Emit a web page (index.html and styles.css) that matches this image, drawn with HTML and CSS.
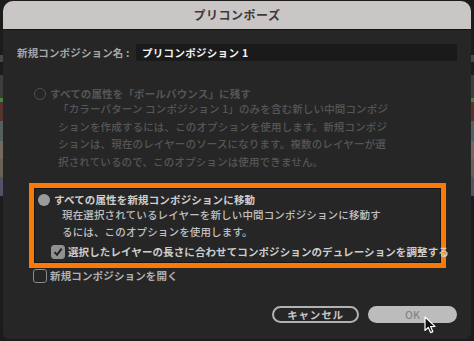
FILE: index.html
```html
<!DOCTYPE html>
<html lang="ja">

<head>
  <meta charset="UTF-8">
  <meta name="viewport" content="width=device-width, initial-scale=1.0">
  <title>プリコンポーズ</title>
  <link rel="stylesheet" href="styles.css">
</head>

<body>
  <div class="dialog">
    <div class="titlebar">プリコンポーズ</div>
    <div class="content">
      <div class="name-row">
        <label for="compName">新規コンポジション名 :</label>
        <input type="text" id="compName" value="プリコンポジション 1">
      </div>

      <div class="option disabled">
        <div class="option-title"><span class="radio"></span>すべての属性を「ポールバウンス」に残す</div>
        <div class="option-desc">「カラーパターン コンポジション 1」のみを含む新しい中間コンポジ<br>
          ションを作成するには、このオプションを使用します。新規コンポジ<br>
          ションは、現在のレイヤーのソースになります。複数のレイヤーが選<br>
          択されているので、このオプションは使用できません。</div>
      </div>

      <div class="option highlight">
        <div class="option-title"><span class="radio checked"></span>すべての属性を新規コンポジションに移動</div>
        <div class="option-desc">現在選択されているレイヤーを新しい中間コンポジションに移動す<br>
          るには、このオプションを使用します。</div>
        <div class="check-row sub">
          <span class="checkbox checked">
            <svg width="10" height="10" viewBox="0 0 10 10"><path d="M1.5 5.2 L4 7.8 L8.6 1.6" fill="none" stroke="#1f1f1f" stroke-width="1.8" /></svg>
          </span>選択したレイヤーの長さに合わせてコンポジションのデュレーションを調整する
        </div>
      </div>

      <div class="check-row open">
        <span class="checkbox"></span>新規コンポジションを開く
      </div>

      <div class="buttons">
        <button class="btn cancel">キャンセル</button>
        <button class="btn ok">OK</button>
      </div>
    </div>
  </div>

  <svg class="cursor" width="14" height="18" viewBox="0 0 14 18">
    <path d="M1 1 L1 14.5 L4.3 11.4 L6.6 16.6 L8.8 15.6 L6.6 10.6 L11 10.4 Z" fill="#111" stroke="#fff" stroke-width="1.2" stroke-linejoin="round" />
  </svg>
</body>

</html>
```

FILE: styles.css
```css
* {
  box-sizing: border-box;
  font-family: "Noto Sans CJK JP", "Noto Sans", sans-serif;
}

html,
body {
  margin: 0;
  height: 100%;
}

body {
  position: relative;
  overflow: hidden;
  background: linear-gradient(to bottom,
      #1c1c1c 0 55px,
      #474747 55px 62px,
      #1c1c1c 62px 75px,
      #3e3e3e 75px 98px,
      #3a8a3a 98px 102px,
      #58322c 102px 121px,
      #546060 121px 141px,
      #74695a 141px 159px,
      #696152 159px 177px,
      #53526a 177px 196px,
      #1c1c1c 196px);
}

.dialog {
  height: 338px;
  margin: 1px 3px 0 3px;
  background: #262626;
  border-radius: 10px 10px 6px 6px;
  overflow: hidden;
  display: flex;
  flex-direction: column;
}

.titlebar {
  height: 29px;
  flex: none;
  background: #cac6c6;
  border-bottom: 1px solid #141414;
  color: #3a3a3a;
  font-size: 12px;
  font-weight: 700;
  line-height: 28px;
  text-align: center;
  letter-spacing: 0.5px;
}

.content {
  flex: 1;
  padding: 14px 14px 0 14px;
  display: flex;
  flex-direction: column;
  font-size: 10.5px;
  letter-spacing: 0.15px;
}

.name-row {
  display: flex;
  align-items: center;
  height: 17px;
}

.name-row label {
  width: 119px;
  color: #a6a6a6;
  font-weight: 700;
  font-size: 10.5px;
}

.name-row input {
  flex: 1;
  height: 17px;
  border: none;
  background: #1a1a1a;
  color: #f2f2f2;
  font-weight: 700;
  font-size: 10.5px;
  letter-spacing: 0.3px;
  padding: 0 6px;
  outline: none;
}

.option-title {
  display: flex;
  align-items: center;
  line-height: 12px;
  height: 12px;
  font-weight: 700;
  white-space: nowrap;
}

.option-desc {
  padding-left: 24px;
  font-weight: 500;
  white-space: nowrap;
}

.radio {
  width: 12px;
  height: 12px;
  border-radius: 50%;
  margin-right: 4px;
  flex: none;
}

.disabled {
  margin: 27px 0 0 17px;
  color: #565656;
}

.disabled .radio {
  border: 1.5px solid #505050;
}

.disabled .option-desc {
  line-height: 17.5px;
}

.highlight {
  margin: 13px 11px 0 12px;
  border: 5px solid #fb7a06;
  box-shadow: inset 0 0 0 1px #151515;
  padding: 6px 4px 4px 4px;
  color: #c4c4c4;
}

.highlight .option-title {
  color: #cfcfcf;
}

.highlight .option-desc {
  line-height: 17px;
  color: #c0c0c0;
}

.radio.checked {
  background: #9b9b9b;
}

.check-row {
  display: flex;
  align-items: center;
  height: 14px;
  line-height: 14px;
  font-weight: 700;
  white-space: nowrap;
}

.sub {
  margin: 5px 0 0 13px;
  color: #cdcdcd;
  letter-spacing: 0.1px;
}

.open {
  margin: 1px 0 0 16px;
  color: #b0b0b0;
}

.checkbox {
  width: 14px;
  height: 14px;
  border-radius: 3px;
  border: 1.5px solid #8a8a8a;
  margin-right: 3px;
  flex: none;
  display: flex;
  align-items: center;
  justify-content: center;
}

.checkbox.checked {
  background: #909090;
  border-color: #909090;
}

.buttons {
  margin-top: 23px;
  display: flex;
  justify-content: flex-end;
  gap: 9px;
}

.btn {
  height: 17px;
  border-radius: 9px;
  font-size: 10.5px;
  font-weight: 700;
  padding: 0;
  line-height: 13px;
}

.cancel {
  width: 87px;
  background: #262626;
  border: 2px solid #b2b2b2;
  color: #c8c8c8;
  letter-spacing: 0.8px;
}

.ok {
  width: 89px;
  background: #bcbcbc;
  border: none;
  color: #858585;
  font-weight: 500;
}

.cursor {
  position: absolute;
  left: 424px;
  top: 316px;
}
```
